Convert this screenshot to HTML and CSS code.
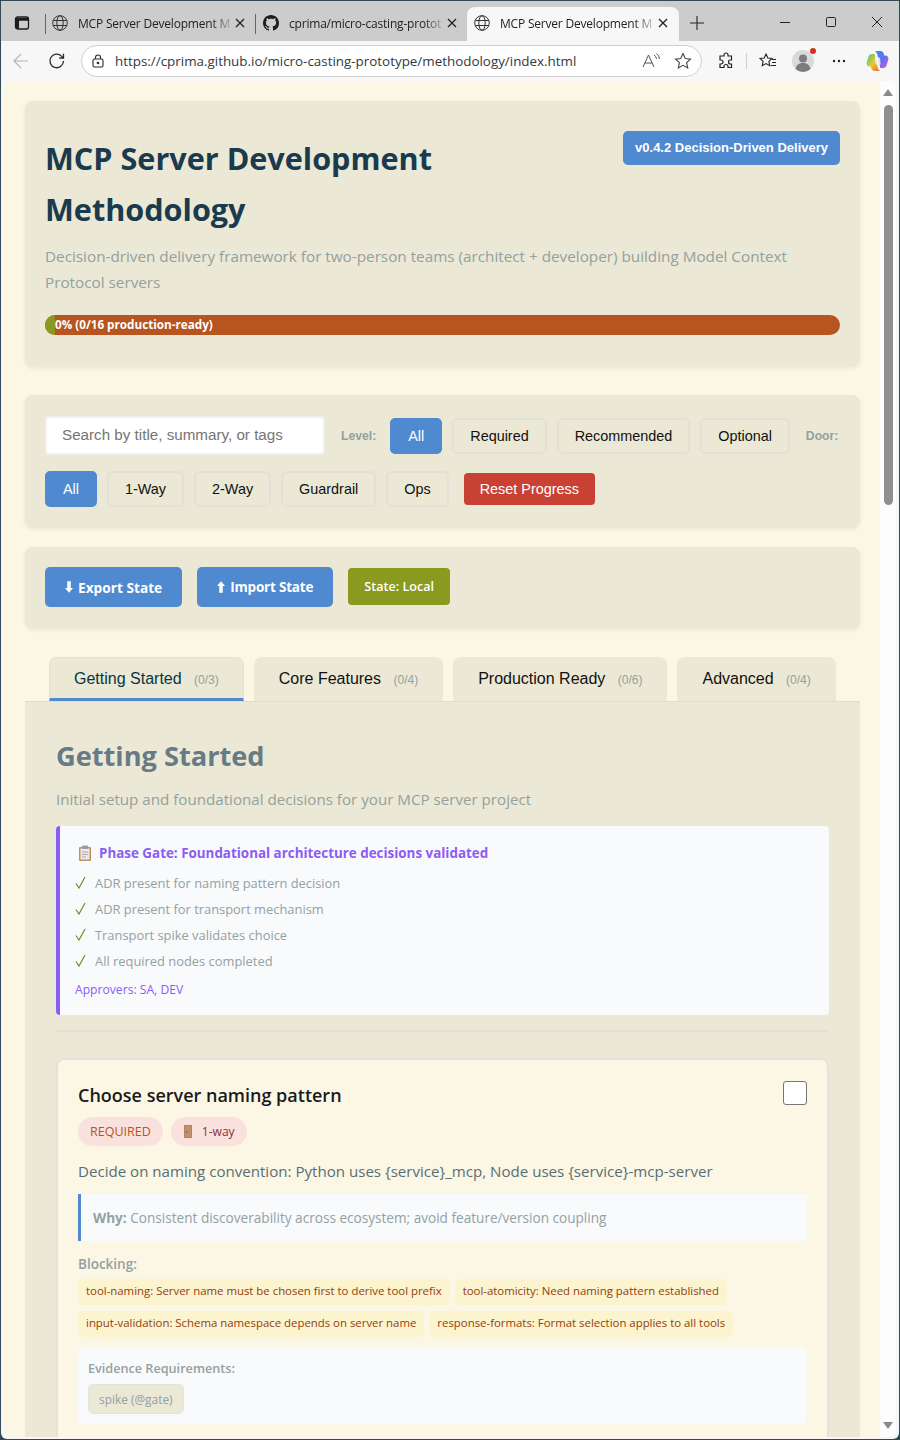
FILE: index.html
```html
<!DOCTYPE html>
<html lang="en">
<head>
	<meta charset="UTF-8">
	<title>MCP Server Development Methodology</title>
	<link rel="stylesheet" href="styles.css">
</head>
<body>
<div class="window">
	<!-- tab strip -->
	<div class="tabstrip">
		<svg class="ic panes" width="16" height="16" viewBox="0 0 16 16"><rect x="1.5" y="2" width="13" height="12" rx="2" fill="none" stroke="#1c1c1c" stroke-width="1.3"/><path d="M2 3h12v2.8H5v8H2z" fill="#1c1c1c"/></svg>
		<i class="tab-sep"></i>
		<div class="btab btab-1">
			<svg class="ic" width="16" height="16" viewBox="0 0 16 16" fill="none" stroke="#333" stroke-width="1"><circle cx="8" cy="8" r="7.3"/><ellipse cx="8" cy="8" rx="3.2" ry="7.3"/><path d="M1.2 5.5h13.6M1.2 10.500h13.6"/></svg>
			<span class="btab-title">MCP Server Development M</span>
			<svg class="ic btab-x" width="10" height="10" viewBox="0 0 10 10" stroke="#222" stroke-width="1.3"><path d="M1 1l8 8M9 1L1 9"/></svg>
		</div>
		<i class="tab-sep tab-sep-b"></i>
		<div class="btab btab-2">
			<svg class="ic" width="16" height="16" viewBox="0 0 16 16"><path fill="#1b1f23" d="M8 0C3.58 0 0 3.58 0 8c0 3.54 2.29 6.53 5.47 7.59.4.07.55-.17.55-.38 0-.19-.01-.82-.01-1.49-2.01.37-2.53-.49-2.69-.94-.09-.23-.48-.94-.82-1.13-.28-.15-.68-.52-.01-.53.63-.01 1.08.58 1.23.82.72 1.21 1.87.87 2.33.66.07-.52.28-.87.51-1.07-1.78-.2-3.64-.89-3.64-3.95 0-.87.31-1.59.82-2.15-.08-.2-.36-1.02.08-2.12 0 0 .67-.21 2.2.82.64-.18 1.32-.27 2-.27.68 0 1.36.09 2 .27 1.53-1.04 2.2-.82 2.2-.82.44 1.1.16 1.92.08 2.12.51.56.82 1.27.82 2.15 0 3.07-1.87 3.75-3.65 3.95.29.25.54.73.54 1.48 0 1.07-.01 1.93-.01 2.2 0 .21.15.46.55.38A8.013 8.013 0 0016 8c0-4.42-3.58-8-8-8z"/></svg>
			<span class="btab-title">cprima/micro-casting-protot</span>
			<svg class="ic btab-x" width="10" height="10" viewBox="0 0 10 10" stroke="#222" stroke-width="1.3"><path d="M1 1l8 8M9 1L1 9"/></svg>
		</div>
		<div class="btab btab-active">
			<svg class="ic" width="16" height="16" viewBox="0 0 16 16" fill="none" stroke="#333" stroke-width="1"><circle cx="8" cy="8" r="7.3"/><ellipse cx="8" cy="8" rx="3.2" ry="7.3"/><path d="M1.2 5.5h13.6M1.2 10.500h13.6"/></svg>
			<span class="btab-title">MCP Server Development M</span>
			<svg class="ic btab-x" width="10" height="10" viewBox="0 0 10 10" stroke="#222" stroke-width="1.3"><path d="M1 1l8 8M9 1L1 9"/></svg>
		</div>
		<svg class="ic newtab" width="16" height="16" viewBox="0 0 16 16" stroke="#222" stroke-width="1.1"><path d="M8 1v14M1 8h14"/></svg>
		<div class="winbtns">
			<svg width="12" height="12" viewBox="0 0 12 12" stroke="#222" fill="none"><path d="M1 6.5h10"/></svg>
			<svg width="12" height="12" viewBox="0 0 12 12" stroke="#222" fill="none"><rect x="1.5" y="1.5" width="9" height="9" rx="1"/></svg>
			<svg width="12" height="12" viewBox="0 0 12 12" stroke="#222" fill="none"><path d="M1 1l10 10M11 1L1 11"/></svg>
		</div>
	</div>
	<!-- toolbar -->
	<div class="toolbar">
		<svg class="ic back" width="18" height="18" viewBox="0 0 18 18" fill="none" stroke="#b4b4b4" stroke-width="1.2"><path d="M16 9H2M9 2L2 9l7 7"/></svg>
		<svg class="ic reload" width="18" height="18" viewBox="0 0 18 18" fill="none" stroke="#2a2a2a" stroke-width="1.3"><path d="M15.5 9a6.8 6.8 0 1 1-2-4.9L15.5 6"/><path d="M15.5 1.8V6h-4.2"/></svg>
		<div class="urlbar">
			<svg class="ic" width="14" height="14" viewBox="0 0 14 14" fill="none" stroke="#2a2a2a" stroke-width="1.1"><rect x="2" y="5" width="10" height="8" rx="1.5"/><path d="M4.5 5V3.5a2.5 2.5 0 0 1 5 0V5"/><circle cx="7" cy="9" r=".8" fill="#2a2a2a"/></svg>
			<span class="url">https://cprima.github.io/micro-casting-prototype/methodology/index.html</span>
			<svg class="ic read" width="20" height="18" viewBox="0 0 20 18" fill="none" stroke="#555" stroke-width="1"><path d="M1 15L6.5 3 12 15M3 11h7"/><path d="M12 3a5 5 0 0 1 2.5 4M14.5 1.5a7 7 0 0 1 3 5.5"/></svg>
			<svg class="ic star" width="18" height="18" viewBox="0 0 18 18" fill="none" stroke="#444" stroke-width="1.1"><path d="M9 1.5l2.3 5 5.2.6-3.9 3.6 1.1 5.3L9 13.3 4.300 16l1.100-5.300L1.500 7.100l5.200-.6z"/></svg>
		</div>
		<svg class="ic ext" width="18" height="18" viewBox="0 0 18 18" fill="none" stroke="#222" stroke-width="1.2"><path d="M7 3a2 2 0 0 1 4 0v1h3.500v4h-1a2 2 0 0 0 0 4h1v3.500H11v-1a2 2 0 0 0-4 0v1H3V12h1a2 2 0 0 0 0-4H3V4h4z"/></svg>
		<i class="tool-sep"></i>
		<svg class="ic favs" width="18" height="18" viewBox="0 0 18 18" fill="none" stroke="#222" stroke-width="1.1"><path d="M7 2l1.800 4 4.200.5-3.100 2.900.9 4.300L7 11.600l-3.800 2.100.9-4.300L1 6.500 5.200 6zM13 7.500h4M13 10.500h4M12 13.500h5"/></svg>
		<div class="avatar">
			<svg width="22" height="22" viewBox="0 0 22 22"><circle cx="11" cy="11" r="11" fill="#d9d9d9"/><circle cx="11" cy="8.500" r="4" fill="#7c7c7c"/><path d="M3.500 19c1-4.500 4-6 7.500-6s6.500 1.500 7.500 6a11 11 0 0 1-15 0z" fill="#7c7c7c"/></svg>
			<i class="avatar-dot"></i>
		</div>
		<svg class="ic dots" width="14" height="4" viewBox="0 0 14 4" fill="#222"><circle cx="2" cy="2" r="1.200"/><circle cx="7" cy="2" r="1.200"/><circle cx="12" cy="2" r="1.200"/></svg>
		<svg class="ic copilot" width="23" height="22" viewBox="0 0 23 22">
			<defs>
				<linearGradient id="cpa" x1="0" y1="0" x2="1" y2="1"><stop offset="0" stop-color="#2f8fe8"/><stop offset=".55" stop-color="#6a6cf0"/><stop offset="1" stop-color="#d65bd6"/></linearGradient>
				<linearGradient id="cpb" x1="0" y1="0" x2="1" y2="1"><stop offset="0" stop-color="#3fc48a"/><stop offset=".5" stop-color="#e6c92e"/><stop offset="1" stop-color="#f0683a"/></linearGradient>
			</defs>
			<path d="M9 1h5.500c1.500 0 2.600.9 3 2.200l.7 2.300h1.300c2 0 3.300 2.200 2.800 4l-1.800 6c-.5 1.500-1.700 2.500-3.200 2.500h-3L11.500 5C11 3 10.200 1.700 9 1z" fill="url(#cpa)"/>
			<path d="M14 21H8.500c-1.500 0-2.600-.9-3-2.200l-.7-2.300H3.500c-2 0-3.300-2.200-2.800-4l1.800-6C3 5 4.200 4 5.700 4h3l2.800 13c.5 2 1.300 3.300 2.500 4z" fill="url(#cpb)"/>
			<path d="M8.700 7.500h5.300l.6 7H9.500z" fill="#f6eef7" opacity=".85"/>
		</svg>
	</div>
	<!-- viewport -->
	<div class="viewport">
		<div class="page">
			<header class="card header">
				<div class="header-top">
					<h1>MCP Server Development Methodology</h1>
					<span class="version">v0.4.2 Decision-Driven Delivery</span>
				</div>
				<p class="subtitle">Decision-driven delivery framework for two-person teams (architect + developer) building Model Context Protocol servers</p>
				<div class="progress">
					<div class="progress-fill"></div>
					<span class="progress-text">0% (0/16 production-ready)</span>
				</div>
			</header>

			<section class="card filters">
				<div class="filter-row">
					<input class="search" type="text" placeholder="Search by title, summary, or tags">
					<span class="filter-label">Level:</span>
					<button class="btn btn-on">All</button>
					<button class="btn">Required</button>
					<button class="btn">Recommended</button>
					<button class="btn">Optional</button>
					<span class="filter-label">Door:</span>
				</div>
				<div class="filter-row filter-row-2">
					<button class="btn btn-on">All</button>
					<button class="btn">1-Way</button>
					<button class="btn">2-Way</button>
					<button class="btn">Guardrail</button>
					<button class="btn">Ops</button>
					<button class="btn-reset">Reset Progress</button>
				</div>
			</section>

			<section class="card state">
				<button class="btn-state"><svg width="8" height="12" viewBox="0 0 9 13" fill="#fff"><path d="M2.500 0h4v7.500H9L4.500 13 0 7.500h2.500z"/></svg>Export State</button>
				<button class="btn-state btn-import"><svg width="8" height="12" viewBox="0 0 9 13" fill="#fff"><path d="M2.500 13h4V5.500H9L4.500 0 0 5.500h2.500z"/></svg>Import State</button>
				<span class="state-pill">State: Local</span>
			</section>

			<nav class="tabs">
				<div class="tab tab-on">Getting Started <small>(0/3)</small></div>
				<div class="tab">Core Features <small>(0/4)</small></div>
				<div class="tab">Production Ready <small>(0/6)</small></div>
				<div class="tab">Advanced <small>(0/4)</small></div>
			</nav>

			<main class="panel">
				<h2>Getting Started</h2>
				<p class="panel-sub">Initial setup and foundational decisions for your MCP server project</p>

				<div class="gate">
					<div class="gate-title">
						<svg width="14" height="16" viewBox="0 0 14 16"><rect x="1" y="2" width="12" height="14" rx="1" fill="#c2905f"/><rect x="2.500" y="3.500" width="9" height="11" fill="#e9e9ee"/><rect x="4" y="0.500" width="6" height="3.500" rx="1" fill="#9a9aa3"/><path d="M4 7h6M4 9.500h6M4 12h4" stroke="#a9a9b2"/></svg>
						Phase Gate: Foundational architecture decisions validated
					</div>
					<ul class="gate-list">
						<li>ADR present for naming pattern decision</li>
						<li>ADR present for transport mechanism</li>
						<li>Transport spike validates choice</li>
						<li>All required nodes completed</li>
					</ul>
					<div class="approvers">Approvers: SA, DEV</div>
				</div>

				<hr class="divider">

				<article class="node">
					<div class="node-head">
						<h3>Choose server naming pattern</h3>
						<input class="node-check" type="checkbox">
					</div>
					<div class="badges">
						<span class="badge badge-req">REQUIRED</span>
						<span class="badge badge-door">
							<svg width="10" height="13" viewBox="0 0 10 13"><rect x="1" y="0" width="8" height="13" fill="#b5835f"/><rect x="2" y="1" width="6" height="11" fill="#c0906a"/><circle cx="3.500" cy="7" r=".7" fill="#70452c"/></svg>
							1-way
						</span>
					</div>
					<p class="node-summary">Decide on naming convention: Python uses {service}_mcp, Node uses {service}-mcp-server</p>
					<div class="why"><b>Why:</b> Consistent discoverability across ecosystem; avoid feature/version coupling</div>
					<div class="blocking-label">Blocking:</div>
					<div class="chips">
						<span class="chip">tool-naming: Server name must be chosen first to derive tool prefix</span>
						<span class="chip">tool-atomicity: Need naming pattern established</span>
						<span class="chip">input-validation: Schema namespace depends on server name</span>
						<span class="chip">response-formats: Format selection applies to all tools</span>
					</div>
					<div class="evidence">
						<div class="evidence-label">Evidence Requirements:</div>
						<span class="evidence-chip">spike (@gate)</span>
					</div>
				</article>
			</main>
		</div>
		<div class="scrollbar">
			<i class="sb-up"></i>
			<div class="sb-thumb"></div>
			<i class="sb-down"></i>
		</div>
	</div>
</div>
</body>
</html>
```

FILE: styles.css
```css
* {
	box-sizing: border-box;
}
html, body {
	margin: 0;
	height: 100%;
	overflow: hidden;
}
body {
	background: #2d4a55;
	font-family: "Open Sans", "Noto Sans", sans-serif;
}
.window {
	display: flex;
	flex-direction: column;
	height: 1438px;
	margin: 1px 1px 0;
	background: #f7f7f7;
	border-radius: 0 0 6px 6px;
	overflow: hidden;
}
.ic {
	flex: none;
	display: block;
}

/* tab strip */
.tabstrip {
	display: flex;
	align-items: center;
	height: 40px;
	flex: none;
	background: #cccccc;
	font-size: 12px;
	color: #222;
}
.panes {
	margin: 4px 15px 0 13px;
}
.tab-sep {
	width: 1px;
	height: 20px;
	margin-top: 6px;
	background: #666;
	flex: none;
}
.btab {
	display: flex;
	align-items: center;
	height: 34px;
	margin-top: 6px;
	padding: 0 0 2px 6px;
	border-radius: 8px 8px 0 0;
	flex: none;
}
.btab-1 {
	width: 209px;
}
.btab-2 {
	width: 211px;
	padding-left: 7px;
}
.btab-active {
	width: 212px;
	background: #f7f7f7;
	padding-left: 7px;
}
.btab-title {
	flex: 1;
	min-width: 0;
	margin-left: 10px;
	white-space: nowrap;
	letter-spacing: -.2px;
	-webkit-mask-image: linear-gradient(90deg, #000 85%, transparent 100%);
	mask-image: linear-gradient(90deg, #000 85%, transparent 100%);
}
.btab-x {
	margin-right: 11px;
}
.btab-1 .btab-x, .btab-2 .btab-x {
	margin-right: 10px;
}
.newtab {
	margin: 4px 0 0 10px;
}
.winbtns {
	display: flex;
	gap: 34px;
	margin: 2px 0 0 74px;
	align-items: center;
}

/* toolbar */
.toolbar {
	display: flex;
	align-items: center;
	height: 40px;
	flex: none;
	background: #f7f7f7;
	padding-left: 11px;
}
.reload {
	margin-left: 18px;
}
.urlbar {
	display: flex;
	align-items: center;
	width: 621px;
	height: 32px;
	margin-left: 15px;
	padding: 0 9px;
	background: #fff;
	border: 1px solid #cfcfcf;
	border-radius: 16px;
}
.url {
	margin-left: 10px;
	font-size: 13.4px;
	color: #33393f;
	white-space: nowrap;
}
.read {
	margin-left: auto;
}
.star {
	margin-left: 12px;
}
.ext {
	margin-left: 15px;
}
.tool-sep {
	width: 1px;
	height: 16px;
	background: #cfcfcf;
	margin: 0 12px 0 11px;
}
.avatar {
	position: relative;
	margin-left: 15px;
	height: 22px;
}
.avatar svg {
	display: block;
}
.avatar-dot {
	position: absolute;
	right: -2px;
	top: -2px;
	width: 6px;
	height: 6px;
	border-radius: 50%;
	background: #d5301f;
}
.dots {
	margin-left: 18px;
}
.copilot {
	margin-left: 20px;
}

/* viewport */
.viewport {
	flex: 1;
	min-height: 0;
	display: flex;
	margin: 0 3px 2px;
	border-radius: 8px;
	overflow: hidden;
}
.page {
	width: 876px;
	flex: none;
	overflow: hidden;
	background: #fcf6e4;
	padding: 20px 20px 0 21px;
	color: #073642;
}
.scrollbar {
	flex: 1;
	display: flex;
	flex-direction: column;
	align-items: center;
	background: #fdfdfd;
	padding: 8px 0;
}
.sb-up, .sb-down {
	width: 0;
	height: 0;
	border-left: 5px solid transparent;
	border-right: 5px solid transparent;
	flex: none;
}
.sb-up {
	border-bottom: 7px solid #8a8a8a;
}
.sb-down {
	border-top: 7px solid #8a8a8a;
	margin-top: auto;
}
.sb-thumb {
	width: 9px;
	height: 400px;
	margin-top: 9px;
	border-radius: 5px;
	background: #8f8f8f;
}

/* cards */
.card {
	background: #ebe8d5;
	border-radius: 8px;
	box-shadow: 0 2px 4px rgba(0,0,0,.08);
	margin-bottom: 20px;
}
.header {
	padding: 30px 20px 31px;
	margin-bottom: 29px;
}
.header-top {
	display: flex;
	justify-content: space-between;
	align-items: flex-start;
}
h1 {
	margin: 2px 0 8px;
	max-width: 500px;
	font-size: 30.6px;
	font-weight: 700;
	line-height: 51px;
	color: #1a3a4d;
}
.version {
	padding: 8px 12px;
	border-radius: 5px;
	background: #4f89d0;
	color: #fff;
	font-family: "Liberation Sans", sans-serif;
	font-size: 13px;
	font-weight: 700;
	line-height: 18px;
	white-space: nowrap;
}
.subtitle {
	margin: 0 0 20px;
	font-size: 15.28px;
	line-height: 26px;
	color: #93a1a1;
}
.progress {
	position: relative;
	height: 20px;
	border-radius: 10px;
	background: #b8541f;
	overflow: hidden;
}
.progress-fill {
	width: 10px;
	height: 100%;
	background: #8a9a1f;
}
.progress-text {
	position: absolute;
	left: 10px;
	top: 0;
	font-size: 11.7px;
	font-weight: 700;
	line-height: 19px;
	color: #fff;
}

/* filters */
.filters {
	padding: 21px 20px 20px;
}
.filter-row {
	display: flex;
	align-items: center;
	gap: 10px;
	font-family: "Liberation Sans", sans-serif;
}
.filter-row-2 {
	margin-top: 16px;
}
.search {
	width: 280px;
	height: 39px;
	padding: 0 15px 2px;
	border: 2px solid #f0f0f0;
	border-radius: 4px;
	background: #fff;
	font-family: "Liberation Sans", sans-serif;
	font-size: 15.2px;
	outline: none;
}
.search::placeholder {
	color: #757575;
}
.filter-label {
	margin-left: 6px;
	margin-right: 4px;
	font-size: 12.2px;
	font-weight: 700;
	color: #93a1a1;
}
.filter-row .filter-label:last-child {
	margin-right: 0;
}
.btn {
	height: 36px;
	padding: 0 16px;
	border: 2px solid #e3e1d7;
	border-radius: 5px;
	background: #ebe8d5;
	color: #111;
	font-family: "Liberation Sans", sans-serif;
	font-size: 14.4px;
}
.btn-on {
	border-color: #4f89d0;
	background: #4f89d0;
	color: #fff;
}
.btn-reset {
	height: 32px;
	margin-left: 5px;
	padding: 0 16px;
	border: none;
	border-radius: 4px;
	background: #c94135;
	color: #fff;
	font-family: "Liberation Sans", sans-serif;
	font-size: 14.4px;
}

/* state */
.state {
	display: flex;
	align-items: flex-start;
	gap: 15px;
	padding: 20px;
	height: 81px;
	margin-bottom: 29px;
}
.btn-state {
	display: flex;
	align-items: center;
	gap: 5px;
	height: 40px;
	padding: 0 20px;
	border: none;
	border-radius: 5px;
	background: #4f89d0;
	color: #fff;
	font-family: "Open Sans", sans-serif;
	font-size: 13.7px;
	font-weight: 700;
	white-space: nowrap;
}
.btn-import {
	font-size: 13.5px;
	letter-spacing: -.2px;
}
.state-pill {
	margin-top: 1px;
	padding: 8px 16px;
	border-radius: 4px;
	background: #8a9a1f;
	color: #fff;
	font-size: 12.6px;
	font-weight: 600;
	line-height: 21px;
}

/* phase tabs */
.tabs {
	display: flex;
	gap: 10px;
	padding-left: 24px;
	font-family: "Liberation Sans", sans-serif;
}
.tab {
	height: 44px;
	padding: 0 25px;
	border-radius: 8px 8px 0 0;
	background: #ebe8d5;
	font-size: 16px;
	line-height: 43px;
	color: #111;
	white-space: nowrap;
}
.tab small {
	margin-left: 8px;
	font-size: 12px;
	color: #93a1a1;
}
.tab-on {
	border: 1px solid #e0e0e0;
	border-bottom: 3px solid #4f89d0;
	padding: 0 24px;
	color: #073642;
	line-height: 41px;
}

/* panel */
.panel {
	padding: 29px 31px 0;
	height: 900px;
	background: #ebe8d5;
	border-top: 1px solid #e0ddd0;
}
.panel h2 {
	margin: 0 0 5px;
	font-size: 27.2px;
	font-weight: 700;
	line-height: 50px;
	color: #687b85;
}
.panel-sub {
	margin: 0 0 14px;
	font-size: 15.15px;
	line-height: 26px;
	color: #93a1a1;
}
.gate {
	height: 189px;
	padding: 16px 15px;
	background: #f9fafc;
	border-left: 4px solid #8b5cf6;
	border-radius: 4px;
}
.gate-title {
	display: flex;
	align-items: center;
	gap: 7px;
	padding-left: 3px;
	font-size: 13.4px;
	font-weight: 700;
	line-height: 22px;
	color: #8b5cf6;
}
.gate-list {
	list-style: none;
	margin: 6px 0 0;
	padding: 0;
	font-size: 12.9px;
	color: #93a1a1;
}
.gate-list li {
	height: 26px;
	padding-left: 20px;
	line-height: 26px;
	background: url("data:image/svg+xml,%3Csvg xmlns='http://www.w3.org/2000/svg' width='11' height='13' viewBox='0 0 11 13'%3E%3Cpath d='M1 7.500l3 4.500 6-11' fill='none' stroke='%23768a2a' stroke-width='1.200'/%3E%3C/svg%3E") no-repeat 0 6px;
}
.approvers {
	margin-top: 6px;
	font-size: 12.15px;
	line-height: 20px;
	color: #8b5cf6;
}
.divider {
	height: 2px;
	margin: 15px 0 26px;
	border: none;
	background: #e3e1d5;
}

/* node */
.node {
	height: 500px;
	padding: 20px;
	background: #fcf6e4;
	border: 2px solid #e3e2dd;
	border-radius: 8px;
}
.node-head {
	display: flex;
	justify-content: space-between;
	align-items: flex-start;
}
.node-head h3 {
	margin: 0;
	font-size: 18px;
	font-weight: 600;
	line-height: 30px;
	color: #1a1a1a;
}
.node-check {
	appearance: none;
	width: 24px;
	height: 24px;
	margin: 1px 0 0;
	background: #fff;
	border: 1px solid #767676;
	border-radius: 3px;
}
.badges {
	display: flex;
	gap: 8px;
	margin-top: 7px;
}
.badge {
	display: flex;
	align-items: center;
	gap: 8px;
	height: 29px;
	padding: 0 12px;
	border-radius: 15px;
	background: #f9e2de;
	font-size: 12.5px;
	color: #b8541f;
}
.badge-door {
	gap: 9px;
	font-size: 12.1px;
	color: #8c2f39;
}
.node-summary {
	margin: 12px 0 0;
	font-size: 15.1px;
	line-height: 26px;
	color: #586e75;
}
.why {
	height: 47px;
	margin-top: 10px;
	padding: 0 12px;
	background: #f9fafc;
	border-left: 3px solid #4f89d0;
	font-size: 13.6px;
	line-height: 47px;
	color: #93a1a1;
}
.blocking-label {
	margin-top: 13px;
	font-size: 13.5px;
	font-weight: 600;
	line-height: 20px;
	color: #93a1a1;
}
.chips {
	display: flex;
	flex-wrap: wrap;
	gap: 6px 5px;
	margin-top: 5px;
}
.chip {
	height: 26px;
	padding: 0 8px;
	border-radius: 5px;
	background: #fcf3cf;
	font-size: 11.4px;
	line-height: 24px;
	color: #92400e;
	white-space: nowrap;
}
.evidence {
	height: 77px;
	margin-top: 10px;
	padding: 10px;
	background: #f9fafc;
	border-radius: 6px;
}
.evidence-label {
	font-size: 12.65px;
	font-weight: 600;
	line-height: 22px;
	color: #93a1a1;
}
.evidence-chip {
	display: inline-block;
	height: 30px;
	margin-top: 5px;
	padding: 0 10px;
	border: 1px solid #e3e2dd;
	border-radius: 5px;
	background: #ebe8d5;
	font-size: 11.9px;
	line-height: 28px;
	color: #93a1a1;
}
```
